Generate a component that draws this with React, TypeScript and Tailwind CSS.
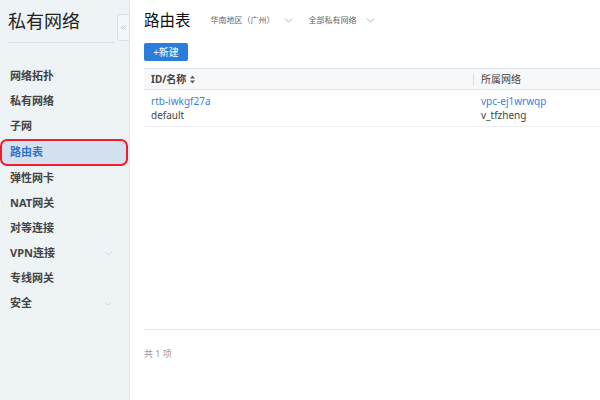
import { ChevronDown, ChevronsLeft } from 'lucide-react'

const navItems = [
  { label: '网络拓扑' },
  { label: '私有网络' },
  { label: '子网' },
  { label: '路由表', active: true },
  { label: '弹性网卡' },
  { label: 'NAT网关' },
  { label: '对等连接' },
  { label: 'VPN连接', sub: true },
  { label: '专线网关' },
  { label: '安全', sub: true },
]

function Dropdown({ label }: { label: string }) {
  return (
    <div className="flex items-center gap-[7px] text-[8px] text-[#666]">
      <span>{label}</span>
      <ChevronDown size={13} strokeWidth={1.2} className="text-[#888]" />
    </div>
  )
}

export default function App() {
  return (
    <div
      className="w-[600px] h-[400px] flex bg-white overflow-hidden"
      style={{ fontFamily: '"Noto Sans", "Noto Sans CJK SC", sans-serif' }}
    >
      {/* Sidebar */}
      <aside className="relative w-[130px] h-full bg-[#eef3f6] border-r border-[#dde4ea] shrink-0">
        <div className="px-2 pt-[8px]">
          <h1 className="text-[18px] leading-[26px] text-[#222]">私有网络</h1>
          <div className="mt-[8px] mr-[6px] h-px bg-[#d9e1e7]" />
        </div>
        <button className="absolute left-[117px] top-[14px] w-[13px] h-[27px] flex items-center justify-center bg-[#f3f7fa] border border-[#d6e0e8] rounded-l-[3px]">
          <ChevronsLeft size={9} strokeWidth={1.5} className="text-[#8a9aa8]" />
        </button>
        <nav className="mt-[21px] flex flex-col">
          {navItems.map((it) =>
            it.active ? (
              <div
                key={it.label}
                className="mr-px h-[27px] flex items-center px-[8px] text-[11px] font-bold text-[#2d74d0] bg-[#d3e0ed] border-2 border-[#ee1f2a] rounded-[7px]"
              >
                {it.label}
              </div>
            ) : (
              <div
                key={it.label}
                className="h-[25px] flex items-center justify-between pl-[10px] pr-[15px] text-[11px] font-bold text-[#444]"
              >
                <span>{it.label}</span>
                {it.sub && <ChevronDown size={11} strokeWidth={1} className="text-[#aab4bd]" />}
              </div>
            )
          )}
        </nav>
      </aside>

      {/* Main */}
      <main className="flex-1 pl-[14px]">
        <div className="h-[40px] flex items-center gap-[20px]">
          <h2 className="text-[15.5px] text-[#111] leading-[22px]">路由表</h2>
          <div className="flex items-center gap-[14px]">
            <Dropdown label="华南地区（广州）" />
            <Dropdown label="全部私有网络" />
          </div>
        </div>
        <div className="mt-[3px] h-[18px]">
          <button className="h-[18px] w-[44px] bg-[#2b7ddb] text-white text-[10px] rounded-[2px] flex items-center justify-center">
            +新建
          </button>
        </div>

        <div className="mt-[7px] border-t border-[#dfe3ea]">
          <div className="h-[21px] flex items-center bg-[#f7f8fa] border-b border-[#e3e6eb] text-[10px] font-bold text-[#444]">
            <div className="w-[329px] pl-[7px] flex items-center gap-[3px]">
              <span>ID/名称</span>
              <svg width="7" height="9" viewBox="0 0 7 9" className="text-[#555]">
                <path d="M3.5 0.5 L6 3.5 H1 Z M3.5 8.5 L6 5.5 H1 Z" fill="currentColor" />
              </svg>
            </div>
            <div className="h-[13px] border-l border-[#dcdfe4] pl-[7px] flex items-center font-normal text-[#444]">
              所属网络
            </div>
          </div>
          <div className="h-[37px] flex items-center border-b border-[#eceef1] text-[10px] leading-[14px]">
            <div className="w-[329px] pl-[7px]">
              <div className="text-[#3c7fdb]">rtb-iwkgf27a</div>
              <div className="text-[#444]">default</div>
            </div>
            <div className="pl-[8px]">
              <div className="text-[#3c7fdb]">vpc-ej1wrwqp</div>
              <div className="text-[#444]">v_tfzheng</div>
            </div>
          </div>
        </div>

        <div className="mt-[202px] border-t border-[#e3e6ee]" />
        <div className="mt-[18px] h-[12px] leading-[12px] text-[9px] text-[#999]">共 1 项</div>
      </main>
    </div>
  )
}
